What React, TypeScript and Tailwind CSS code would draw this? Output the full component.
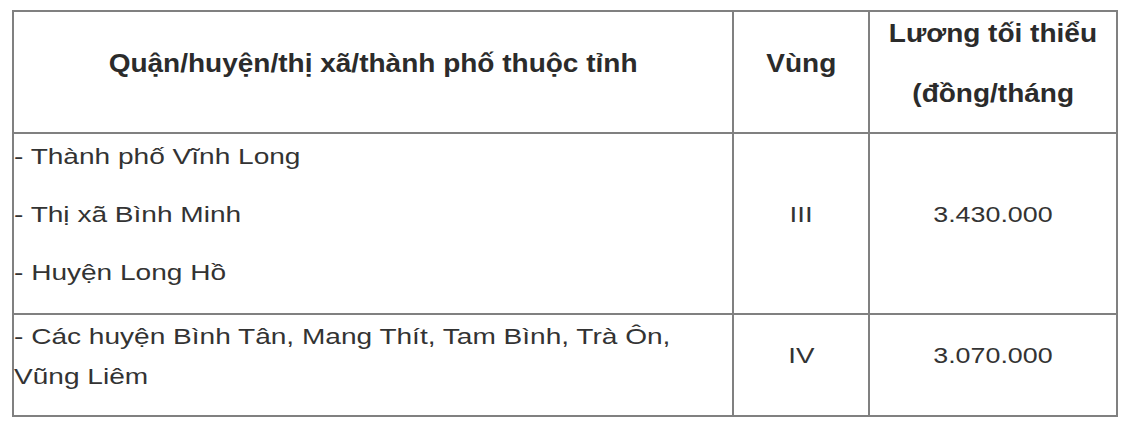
const rows = [
  {
    area: [["- Thành phố Vĩnh Long"], ["- Thị xã Bình Minh"], ["- Huyện Long Hồ"]],
    zone: "III",
    wage: "3.430.000",
    h: "h-[181px] align-middle",
  },
  {
    // the source wraps after "Trà Ôn,"
    area: [["- Các huyện Bình Tân, Mang Thít, Tam Bình, Trà Ôn,", "Vũng Liêm"]],
    zone: "IV",
    wage: "3.070.000",
    h: "h-[102px] pt-[2px] align-top",
  },
];

const cell = "p-0 border-r-2 border-b-2 border-[#808080] align-middle";

export default function App() {
  return (
    <div
      className="w-[1128px] h-[434px] bg-white pt-[10px] pl-[12px]"
      style={{ fontFamily: '"Liberation Sans", Arial, sans-serif' }}
    >
      <table className="table-fixed w-[1106px] border-separate border-spacing-0 border-l-2 border-t-2 border-[#808080] text-[#333]">
        <colgroup>
          <col className="w-[720px]" />
          <col className="w-[136px]" />
          <col className="w-[248px]" />
        </colgroup>
        <thead>
          <tr className="font-bold text-[25px] leading-[42px] text-[#2b2b2b]">
            <th className={`${cell} h-[122px] text-center`}>
              <p className="mb-[18px]">
                <span className="inline-block scale-x-[1.12]">Quận/huyện/thị xã/thành phố thuộc tỉnh</span>
              </p>
            </th>
            <th className={`${cell} text-center`}>
              <p className="mb-[18px]">
                <span className="inline-block scale-x-[1.12]">Vùng</span>
              </p>
            </th>
            <th className={`${cell} text-center`}>
              <p className="mb-[18px]">
                <span className="inline-block scale-x-[1.12]">Lương tối thiểu</span>
              </p>
              <p className="mb-[18px]">
                <span className="inline-block scale-x-[1.12]">(đồng/tháng</span>
              </p>
            </th>
          </tr>
        </thead>
        <tbody className="text-[22px] leading-[40px]">
          {rows.map((r) => (
            <tr key={r.zone}>
              <td className={`p-0 border-r-2 border-b-2 border-[#808080] ${r.h}`}>
                {r.area.map((lines) => (
                  <p key={lines[0]} className="mb-[18px]">
                    {lines.map((l) => (
                      <span key={l} className="block origin-left scale-x-[1.275] whitespace-nowrap">
                        {l}
                      </span>
                    ))}
                  </p>
                ))}
              </td>
              <td className={`${cell} text-center`}>
                <p className="mb-[18px]">
                  <span className="inline-block scale-x-[1.26]">{r.zone}</span>
                </p>
              </td>
              <td className={`${cell} text-center`}>
                <p className="mb-[18px]">
                  <span className="inline-block scale-x-[1.22]">{r.wage}</span>
                </p>
              </td>
            </tr>
          ))}
        </tbody>
      </table>
    </div>
  );
}
